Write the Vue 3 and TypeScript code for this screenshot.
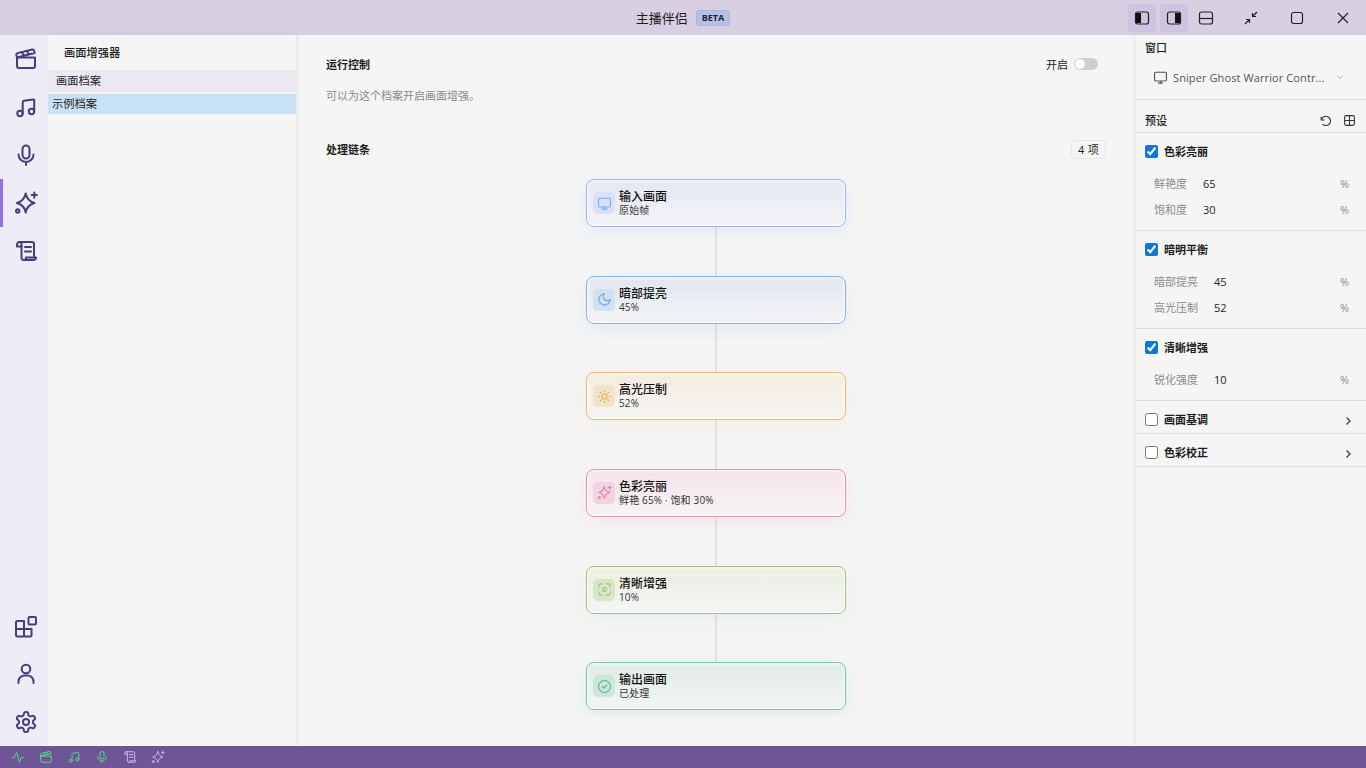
<template>
  <svg class="sprite" aria-hidden="true">
    <symbol id="i-movie" viewBox="0 0 24 24"><path d="M3 10.500h18V19a2 2 0 0 1-2 2H5a2 2 0 0 1-2-2z"/><path d="M3 10.500 2.400 8a1.600 1.600 0 0 1 1.200-1.900l14.600-3.600a1.600 1.600 0 0 1 1.900 1.200l.6 2.300L3 10.500z"/><path d="m7.500 5 2.400 3.200M12.500 3.800 15 7"/></symbol>
    <symbol id="i-music" viewBox="0 0 24 24"><circle cx="6" cy="18.500" r="2.700"/><circle cx="17.500" cy="16.500" r="2.700"/><path d="M8.700 18.500V7.200a1.500 1.500 0 0 1 1.300-1.500l9-1.300a1 1 0 0 1 1.200 1v10.600"/></symbol>
    <symbol id="i-mic" viewBox="0 0 24 24"><rect x="8.500" y="2.500" width="7" height="13" rx="3.500"/><path d="M4.500 11.500a7.500 7.500 0 0 0 15 0M12 19v3"/></symbol>
    <symbol id="i-spark" viewBox="0 0 24 24"><path d="M11.700 2.500c1 5.400 3.400 8 8.800 9.500-5.400 1.500-7.800 4.100-8.800 9.500-1-5.400-3.400-8-8.800-9.500 5.400-1.500 7.800-4.100 8.800-9.500z"/><circle cx="3.700" cy="20" r="1.700"/><path d="M20.300 1.500v5.200M17.700 4.100h5.200"/></symbol>
    <symbol id="i-scroll" viewBox="0 0 24 24"><path d="M5.500 3H18a2 2 0 0 1 2 2v13"/><path d="M5.500 3A2.500 2.500 0 0 0 3 5.500V7.500h4.500"/><path d="M5.500 3a2 2 0 0 1 2 2v14a2.200 2.200 0 0 0 2.200 2H20a2.200 2.200 0 0 0 2-2.500h-10v.500a2 2 0 0 1-2.300 2"/><path d="M11 8h6M11 12.500h6"/></symbol>
    <symbol id="i-apps" viewBox="0 0 24 24"><path d="M2 15V8.500A1.500 1.500 0 0 1 3.500 7H10v15.500H3.500A1.500 1.500 0 0 1 2 21zM2 15h15.500v6a1.500 1.500 0 0 1-1.500 1.500h-6"/><rect x="14.500" y="3" width="7.500" height="7.500" rx="1"/></symbol>
    <symbol id="i-user" viewBox="0 0 24 24"><circle cx="12" cy="7" r="4.300"/><path d="M4.500 21v-1.500a6 6 0 0 1 6-6h3a6 6 0 0 1 6 6V21"/></symbol>
    <symbol id="i-gear" viewBox="0 0 24 24"><path d="M12.220 2h-.44a2 2 0 0 0-2 2v.18a2 2 0 0 1-1 1.730l-.43.250a2 2 0 0 1-2 0l-.15-.08a2 2 0 0 0-2.730.730l-.22.380a2 2 0 0 0 .73 2.730l.15.100a2 2 0 0 1 1 1.720v.510a2 2 0 0 1-1 1.740l-.15.090a2 2 0 0 0-.73 2.730l.22.380a2 2 0 0 0 2.730.730l.15-.08a2 2 0 0 1 2 0l.43.250a2 2 0 0 1 1 1.730V20a2 2 0 0 0 2 2h.44a2 2 0 0 0 2-2v-.18a2 2 0 0 1 1-1.730l.43-.25a2 2 0 0 1 2 0l.15.08a2 2 0 0 0 2.730-.73l.22-.39a2 2 0 0 0-.73-2.730l-.15-.08a2 2 0 0 1-1-1.740v-.5a2 2 0 0 1 1-1.740l.15-.09a2 2 0 0 0 .73-2.730l-.22-.38a2 2 0 0 0-2.730-.73l-.15.08a2 2 0 0 1-2 0l-.43-.25a2 2 0 0 1-1-1.730V4a2 2 0 0 0-2-2z"/><circle cx="12" cy="12" r="3"/></symbol>
    <symbol id="i-monitor" viewBox="0 0 24 24"><rect x="2.500" y="3.500" width="19" height="14" rx="2"/><path d="M12 17.500v3.500M8 21h8"/></symbol>
    <symbol id="i-moon" viewBox="0 0 24 24"><path d="M12 3a6 6 0 0 0 9 9 9 9 0 1 1-9-9z"/></symbol>
    <symbol id="i-sun" viewBox="0 0 24 24"><circle cx="12" cy="12" r="4"/><path d="M12 2.500v2M12 19.500v2M2.500 12h2M19.500 12h2M5.300 5.300l1.400 1.400M17.300 17.300l1.400 1.400M5.300 18.700l1.400-1.400M17.300 6.700l1.400-1.400"/></symbol>
    <symbol id="i-focus" viewBox="0 0 24 24"><path d="M3 8V6a3 3 0 0 1 3-3h2M16 3h2a3 3 0 0 1 3 3v2M21 16v2a3 3 0 0 1-3 3h-2M8 21H6a3 3 0 0 1-3-3v-2"/><circle cx="12" cy="12" r="3"/></symbol>
    <symbol id="i-check" viewBox="0 0 24 24"><circle cx="12" cy="12" r="9.500"/><path d="m8.500 12 2.500 2.500 4.500-4.500"/></symbol>
    <symbol id="i-pulse" viewBox="0 0 24 24"><path d="M2 13h4l3.500-9 5 17 3-8h4.500"/></symbol>
  </svg>

  <div class="app">
    <header class="titlebar">
      <div class="title">
        <span>主播伴侣</span>
        <span class="beta">BETA</span>
      </div>
      <div class="title-actions">
        <button class="tb-btn on">
          <svg viewBox="0 0 16 16"><rect x="1.500" y="2" width="13" height="12" rx="2" class="ln"/><path d="M2 3h5v10H2z" class="solid"/></svg>
        </button>
        <button class="tb-btn on">
          <svg viewBox="0 0 16 16"><rect x="1.500" y="2" width="13" height="12" rx="2" class="ln"/><path d="M9 3h5v10H9z" class="solid"/></svg>
        </button>
        <button class="tb-btn">
          <svg viewBox="0 0 16 16"><rect x="1.500" y="2" width="13" height="12" rx="2" class="ln"/><path d="M1.500 8.500h13" class="ln"/></svg>
        </button>
        <button class="win-btn">
          <svg viewBox="0 0 16 16"><path d="M14 2 9.500 6.500M9.500 3v3.500H13M2 14l4.500-4.500M3 9.500h3.500V13" class="ln"/></svg>
        </button>
        <button class="win-btn">
          <svg viewBox="0 0 16 16"><rect x="2.500" y="2.500" width="11" height="11" rx="2" class="ln"/></svg>
        </button>
        <button class="win-btn">
          <svg viewBox="0 0 16 16"><path d="m3 3 10 10M13 3 3 13" class="ln"/></svg>
        </button>
      </div>
    </header>

    <div class="body">
      <nav class="rail">
        <div class="rail-group">
          <a v-for="n in topNav" :key="n" class="rail-item" :class="{ active: n === 'i-spark' }">
            <svg class="ico"><use :href="'#' + n" /></svg>
          </a>
        </div>
        <div class="rail-group">
          <a v-for="n in bottomNav" :key="n" class="rail-item">
            <svg class="ico"><use :href="'#' + n" /></svg>
          </a>
        </div>
      </nav>

      <aside class="profiles">
        <div class="profiles-title">画面增强器</div>
        <div class="profiles-group">画面档案</div>
        <div class="profiles-item">示例档案</div>
      </aside>

      <main class="main">
        <div class="row-head first">
          <span class="h">运行控制</span>
          <label class="switch-wrap">开启<span class="switch"><i /></span></label>
        </div>
        <p class="desc">可以为这个档案开启画面增强。</p>
        <div class="row-head chain-head">
          <span class="h">处理链条</span>
          <span class="count">4 项</span>
        </div>
        <div class="chain-clip">
          <div class="chain">
            <template v-for="(node, i) in nodes" :key="node.title">
              <div v-if="i > 0" class="link" />
              <div class="node" :class="node.tone">
                <span class="node-icon"><svg><use :href="'#' + node.icon" /></svg></span>
                <div class="node-text">
                  <div class="node-title">{{ node.title }}</div>
                  <div class="node-sub">{{ node.sub }}</div>
                </div>
              </div>
            </template>
          </div>
        </div>
      </main>

      <aside class="inspector">
        <section class="sec window">
          <div class="sec-label">窗口</div>
          <div class="select">
            <svg class="mon"><use href="#i-monitor" /></svg>
            <span class="select-text">Sniper Ghost Warrior Contr...</span>
            <svg class="chev" viewBox="0 0 10 10"><path d="m2 3.500 3 3 3-3" /></svg>
          </div>
        </section>
        <section class="sec preset">
          <span class="sec-label">预设</span>
          <div class="preset-tools">
            <svg viewBox="0 0 24 24"><path d="M4 5v6h6" /><path d="M4.500 11A8.500 8.500 0 1 1 6.500 18.500" /></svg>
            <svg viewBox="0 0 24 24"><rect x="3" y="3" width="18" height="18" rx="3" /><path d="M12 3v18M3 12h18" /></svg>
          </div>
        </section>
        <section v-for="g in groups" :key="g.name" class="sec group" :class="{ closed: !g.params.length }">
          <div class="group-head">
            <input type="checkbox" :checked="g.params.length > 0">
            <span>{{ g.name }}</span>
            <svg v-if="!g.params.length" class="arrow" viewBox="0 0 10 10"><path d="m3.500 1.500 3.500 3.500-3.500 3.500" /></svg>
          </div>
          <div v-for="p in g.params" :key="p.label" class="param">
            <span class="param-label">{{ p.label }}</span>
            <span class="param-value">{{ p.value }}</span>
            <span class="param-unit">%</span>
          </div>
        </section>
      </aside>
    </div>

    <footer class="statusbar">
      <svg v-for="s in statusIcons" :key="s.icon" :class="s.cls"><use :href="'#' + s.icon" /></svg>
    </footer>
  </div>
</template>

<script setup lang="ts">
const topNav = ['i-movie', 'i-music', 'i-mic', 'i-spark', 'i-scroll'];
const bottomNav = ['i-apps', 'i-user', 'i-gear'];

const nodes = [
  { title: '输入画面', sub: '原始帧', icon: 'i-monitor', tone: 'blue' },
  { title: '暗部提亮', sub: '45%', icon: 'i-moon', tone: 'sky' },
  { title: '高光压制', sub: '52%', icon: 'i-sun', tone: 'amber' },
  { title: '色彩亮丽', sub: '鲜艳 65% · 饱和 30%', icon: 'i-spark', tone: 'pink' },
  { title: '清晰增强', sub: '10%', icon: 'i-focus', tone: 'lime' },
  { title: '输出画面', sub: '已处理', icon: 'i-check', tone: 'teal' },
];

const groups = [
  { name: '色彩亮丽', params: [{ label: '鲜艳度', value: 65 }, { label: '饱和度', value: 30 }] },
  { name: '暗明平衡', params: [{ label: '暗部提亮', value: 45 }, { label: '高光压制', value: 52 }] },
  { name: '清晰增强', params: [{ label: '锐化强度', value: 10 }] },
  { name: '画面基调', params: [] },
  { name: '色彩校正', params: [] },
];

const statusIcons = [
  { icon: 'i-pulse', cls: 'green' },
  { icon: 'i-movie', cls: 'green' },
  { icon: 'i-music', cls: 'green' },
  { icon: 'i-mic', cls: 'green' },
  { icon: 'i-scroll', cls: 'dim' },
  { icon: 'i-spark', cls: 'dim' },
];
</script>

<style>
html, body {
  margin: 0;
  height: 100%;
  overflow: hidden;
}
</style>

<style scoped>
.sprite {
  display: none;
}

.app {
  display: flex;
  flex-direction: column;
  height: 100vh;
  font-family: "Open Sans", "Noto Sans CJK SC", sans-serif;
  font-size: 11px;
  color: #1c1c1c;
  background: #f5f5f5;
}

button {
  border: 0;
  background: transparent;
  padding: 0;
  display: flex;
  align-items: center;
  justify-content: center;
}

.ln {
  fill: none;
  stroke: #222;
  stroke-width: 1.2;
}

.solid {
  fill: #111;
}

.titlebar {
  height: 35px;
  flex: none;
  display: flex;
  align-items: center;
  justify-content: center;
  position: relative;
  background: #d8d0e2;
}

.title {
  display: flex;
  align-items: center;
  gap: 8px;
  font-size: 13px;
}

.beta {
  font-size: 9px;
  font-weight: 700;
  line-height: 14px;
  padding: 0 5px;
  border: 1px solid #a8b6e6;
  border-radius: 3px;
  background: #b7c0e4;
  color: #1f2440;
}

.title-actions {
  position: absolute;
  top: 0;
  right: 0;
  height: 35px;
  display: flex;
  align-items: center;
}

.tb-btn {
  width: 28px;
  height: 28px;
  margin-right: 4px;
  border-radius: 4px;
}

.tb-btn.on {
  background: #cdc4e0;
}

.tb-btn svg,
.win-btn svg {
  width: 16px;
  height: 16px;
}

.tb-btn:nth-child(3) {
  margin-right: 8px;
}

.win-btn {
  width: 46px;
  height: 35px;
}

.body {
  flex: 1;
  display: flex;
  min-height: 0;
}

.rail {
  width: 48px;
  flex: none;
  display: flex;
  flex-direction: column;
  justify-content: space-between;
  background: #edecf7;
  z-index: 2;
}

.rail-group {
  display: flex;
  flex-direction: column;
}

.rail-item {
  height: 48px;
  display: flex;
  align-items: center;
  justify-content: center;
  padding-left: 4px;
  position: relative;
  color: #4a3b7d;
}

.rail-item.active::before {
  content: "";
  position: absolute;
  left: 0;
  top: 0;
  bottom: 0;
  width: 3px;
  background: #9470e0;
}

.ico {
  width: 24px;
  height: 24px;
  fill: none;
  stroke: currentColor;
  stroke-width: 2;
  stroke-linecap: round;
  stroke-linejoin: round;
}

.profiles {
  width: 248px;
  flex: none;
  background: #f5f5f5;
  box-shadow: 1px 0 5px rgba(0, 0, 0, 0.08);
  z-index: 1;
  font-size: 11.25px;
}

.profiles-title {
  height: 35px;
  line-height: 36px;
  padding-left: 16px;
  font-weight: 500;
}

.profiles-group {
  height: 22px;
  line-height: 22px;
  padding-left: 8px;
  background: #ece8f1;
}

.profiles-item {
  height: 20px;
  line-height: 20px;
  margin-top: 2px;
  padding-left: 4px;
  background: #c9e1f5;
}

.main {
  flex: 1;
  min-width: 0;
  padding: 0 30px;
  display: flex;
  flex-direction: column;
  font-size: 11px;
}

.row-head {
  display: flex;
  align-items: center;
  justify-content: space-between;
}

.first {
  height: 20px;
  margin-top: 19px;
}

.h {
  font-weight: 600;
  font-size: 11px;
}

.switch-wrap {
  display: flex;
  align-items: center;
  gap: 6px;
  margin-right: 8px;
}

.switch {
  width: 24px;
  height: 12px;
  border-radius: 6px;
  background: #cfcfcf;
  display: flex;
  align-items: center;
  padding-left: 1px;
  box-sizing: border-box;
}

.switch i {
  width: 10px;
  height: 10px;
  border-radius: 50%;
  background: #fff;
}

.desc {
  margin: 12px 0 0;
  line-height: 20px;
  color: #8a8a8a;
}

.chain-head {
  margin-top: 33px;
  height: 20px;
}

.count {
  height: 17px;
  line-height: 17px;
  padding: 0 6px;
  border: 1px solid #e6e6e6;
  border-radius: 4px;
  letter-spacing: 0.3px;
}

.chain-clip {
  padding: 20.2px 0 7px;
  overflow: hidden;
}

.chain {
  height: 531px;
  display: flex;
  flex-direction: column;
  align-items: center;
}

.link {
  flex: 1;
  width: 2px;
  background: #e2e2e2;
}

.node {
  --tone: #9db8ea;
  --tint: #e3e7f3;
  --soft: #d8e2f6;
  --ink: #7ba7f0;
  --glow: rgba(123, 167, 240, 0.14);
  width: 260px;
  height: 48px;
  flex: none;
  box-sizing: border-box;
  position: relative;
  display: flex;
  align-items: center;
  gap: 4px;
  padding-left: 6px;
  border: 1px solid var(--tone);
  border-radius: 8px;
  background: linear-gradient(180deg, var(--tint), #f5f5f6);
  box-shadow: 0 5px 18px var(--glow);
}

.node::before {
  content: "";
  position: absolute;
  inset: 2px;
  border: 1px solid color-mix(in srgb, var(--tone) 22%, #fff);
  border-radius: 6px;
  box-shadow: 0 0 0 2px rgba(255, 255, 255, 0.4);
}

.sky {
  --tone: #8fb3d9;
  --tint: #dfe6f0;
  --soft: #d2e0ef;
  --ink: #6ea6dc;
  --glow: rgba(110, 166, 220, 0.14);
}

.amber {
  --tone: #e2bd78;
  --tint: #f5ecdf;
  --soft: #f1e3c9;
  --ink: #e8ae48;
  --glow: rgba(232, 174, 72, 0.1);
}

.pink {
  --tone: #e398b2;
  --tint: #f5e2ea;
  --soft: #f2d3e0;
  --ink: #e27fa8;
  --glow: rgba(226, 127, 168, 0.12);
}

.lime {
  --tone: #a6c184;
  --tint: #ebefe0;
  --soft: #d9e5c8;
  --ink: #9cc26e;
  --glow: rgba(156, 194, 110, 0.12);
}

.teal {
  --tone: #7fc4a6;
  --tint: #deebe5;
  --soft: #cde6da;
  --ink: #4cb98a;
  --glow: rgba(76, 185, 138, 0.14);
}

.node-icon {
  width: 22px;
  height: 22px;
  flex: none;
  display: flex;
  align-items: center;
  justify-content: center;
  border-radius: 5px;
  background: var(--soft);
  color: var(--ink);
}

.node-icon svg {
  width: 15px;
  height: 15px;
  fill: none;
  stroke: currentColor;
  stroke-width: 1.7;
  stroke-linecap: round;
  stroke-linejoin: round;
}

.node-text {
  position: relative;
}

.node-title {
  font-size: 12px;
  line-height: 15px;
  font-weight: 500;
  color: #111;
}

.node-sub {
  font-size: 10px;
  line-height: 13px;
  color: #333;
  letter-spacing: 0.15px;
}

.inspector {
  width: 230px;
  flex: none;
  background: #f5f5f5;
  box-shadow: -1px 0 6px rgba(0, 0, 0, 0.07);
  z-index: 1;
}

.sec {
  border-bottom: 1px solid #dedede;
}

.sec-label {
  font-weight: 500;
}

.window {
  box-sizing: border-box;
  height: 65px;
  padding: 5px 0 0 9px;
  line-height: 15px;
}

.select {
  display: flex;
  align-items: center;
  height: 20px;
  margin-top: 12px;
  padding-left: 8px;
  color: #555;
  font-size: 11px;
  letter-spacing: 0.1px;
}

.mon {
  width: 15px;
  height: 15px;
  margin-right: 5px;
  fill: none;
  stroke: #555;
  stroke-width: 1.8;
}

.chev {
  width: 10px;
  height: 10px;
  margin-left: 11px;
  fill: none;
  stroke: #aaa;
}

.preset {
  height: 24px;
  padding: 8px 10px 0 9px;
  display: flex;
  align-items: center;
  justify-content: space-between;
}

.preset-tools {
  display: flex;
  gap: 11px;
}

.preset-tools svg {
  width: 13px;
  height: 13px;
  fill: none;
  stroke: #333;
  stroke-width: 2;
}

.group {
  padding-bottom: 8px;
}

.group.closed {
  height: 32px;
  padding-bottom: 0;
  overflow: hidden;
}

.group-head {
  height: 36px;
  margin-bottom: 1px;
  display: flex;
  align-items: center;
  padding: 0 13px 0 9px;
  font-weight: 600;
}

.group-head input {
  width: 13px;
  height: 13px;
  margin: 0 6px 0 0;
  accent-color: #0f78d4;
}

.arrow {
  width: 10px;
  height: 10px;
  margin: 4px 0 0 auto;
  fill: none;
  stroke: #444;
  stroke-width: 1.4;
}

.param {
  height: 26px;
  display: flex;
  align-items: center;
  gap: 16px;
  padding: 0 17px 0 18px;
}

.param-label {
  color: #8c8c8c;
}

.param-unit {
  margin-left: auto;
  color: #8c8c8c;
}

.statusbar {
  height: 22px;
  flex: none;
  display: flex;
  align-items: center;
  gap: 14px;
  padding-left: 11px;
  background: #6f5596;
  z-index: 3;
}

.statusbar svg {
  width: 14px;
  height: 14px;
  fill: none;
  stroke-width: 1.6;
  stroke-linecap: round;
  stroke-linejoin: round;
}

.green {
  stroke: #4fe08a;
}

.dim {
  stroke: #cdbde6;
}
</style>
